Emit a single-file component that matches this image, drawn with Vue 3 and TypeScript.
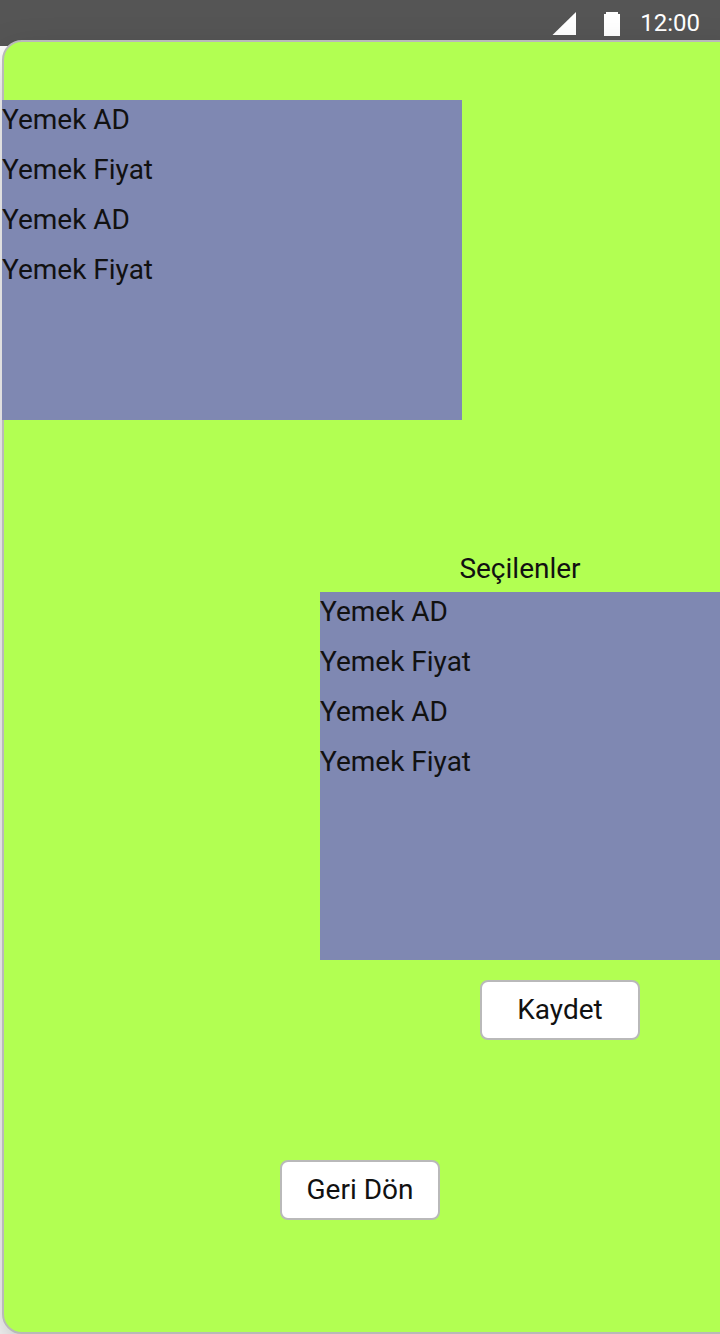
<script setup lang="ts">
const meals: string[] = ['Yemek AD', 'Yemek Fiyat', 'Yemek AD', 'Yemek Fiyat']
</script>

<template>
  <div class="screen">
    <header class="status">
      <svg class="signal" width="24" height="24" viewBox="0 0 24 24"><path d="M24 0V23H0.5Z" fill="#fff" /></svg>
      <svg class="battery" width="16" height="24" viewBox="0 0 16 24"><path d="M2 0H14V2H16V24H0V2H2Z" fill="#fff" /></svg>
      <span class="clock">12:00</span>
    </header>
    <main class="panel">
      <ul class="list menu">
        <li v-for="(meal, i) in meals" :key="i">{{ meal }}</li>
      </ul>
      <section class="selected">
        <h2 class="title">Seçilenler</h2>
        <ul class="list chosen">
          <li v-for="(meal, i) in meals" :key="i">{{ meal }}</li>
        </ul>
      </section>
      <button class="button save" type="button">Kaydet</button>
      <button class="button back" type="button">Geri Dön</button>
    </main>
  </div>
</template>

<style>
body {
  margin: 0;
  background: #fff;
}
</style>

<style scoped>
.screen {
  width: 720px;
  height: 1334px;
  overflow: hidden;
  font-family: Roboto, "Noto Sans", sans-serif;
  font-size: 28px;
  color: #111;
}
.status {
  box-sizing: border-box;
  height: 46px;
  padding: 0 20px 0 0;
  display: flex;
  justify-content: flex-end;
  align-items: flex-start;
  background: #555;
}
.signal {
  margin-top: 12px;
}
.battery {
  margin: 12px 20px 0 28px;
}
.clock {
  font-size: 24px;
  line-height: 46px;
  color: #fff;
}
.panel {
  box-sizing: border-box;
  display: flex;
  flex-direction: column;
  align-items: flex-start;
  width: 760px;
  height: 1294px;
  margin: -6px 0 0 2px;
  padding-top: 58px;
  border: 2px solid #b9b9b9;
  border-radius: 20px;
  background: #b2ff52;
  box-shadow: 0 20px 40px rgba(0, 0, 0, 0.26);
  position: relative;
}
.list {
  box-sizing: border-box;
  margin: 0;
  padding: 0;
  list-style: none;
  background: #7f88b2;
}
.list li {
  height: 50px;
  line-height: 40px;
}
.menu {
  width: 460px;
  height: 320px;
  margin-left: -2px;
}
.selected {
  width: 400px;
  margin: 126px 0 0 316px;
}
.title {
  margin: 0;
  height: 46px;
  line-height: 46px;
  font-size: 28px;
  font-weight: 400;
  text-align: center;
}
.chosen {
  width: 440px;
  height: 368px;
}
.button {
  box-sizing: border-box;
  width: 160px;
  height: 60px;
  padding: 0 0 2px;
  border: 2px solid #b9b9b9;
  border-radius: 8px;
  background: #fff;
  color: #111;
  font: inherit;
}
.save {
  margin: 20px 0 0 476px;
}
.back {
  margin: 120px 0 0 276px;
}
</style>
